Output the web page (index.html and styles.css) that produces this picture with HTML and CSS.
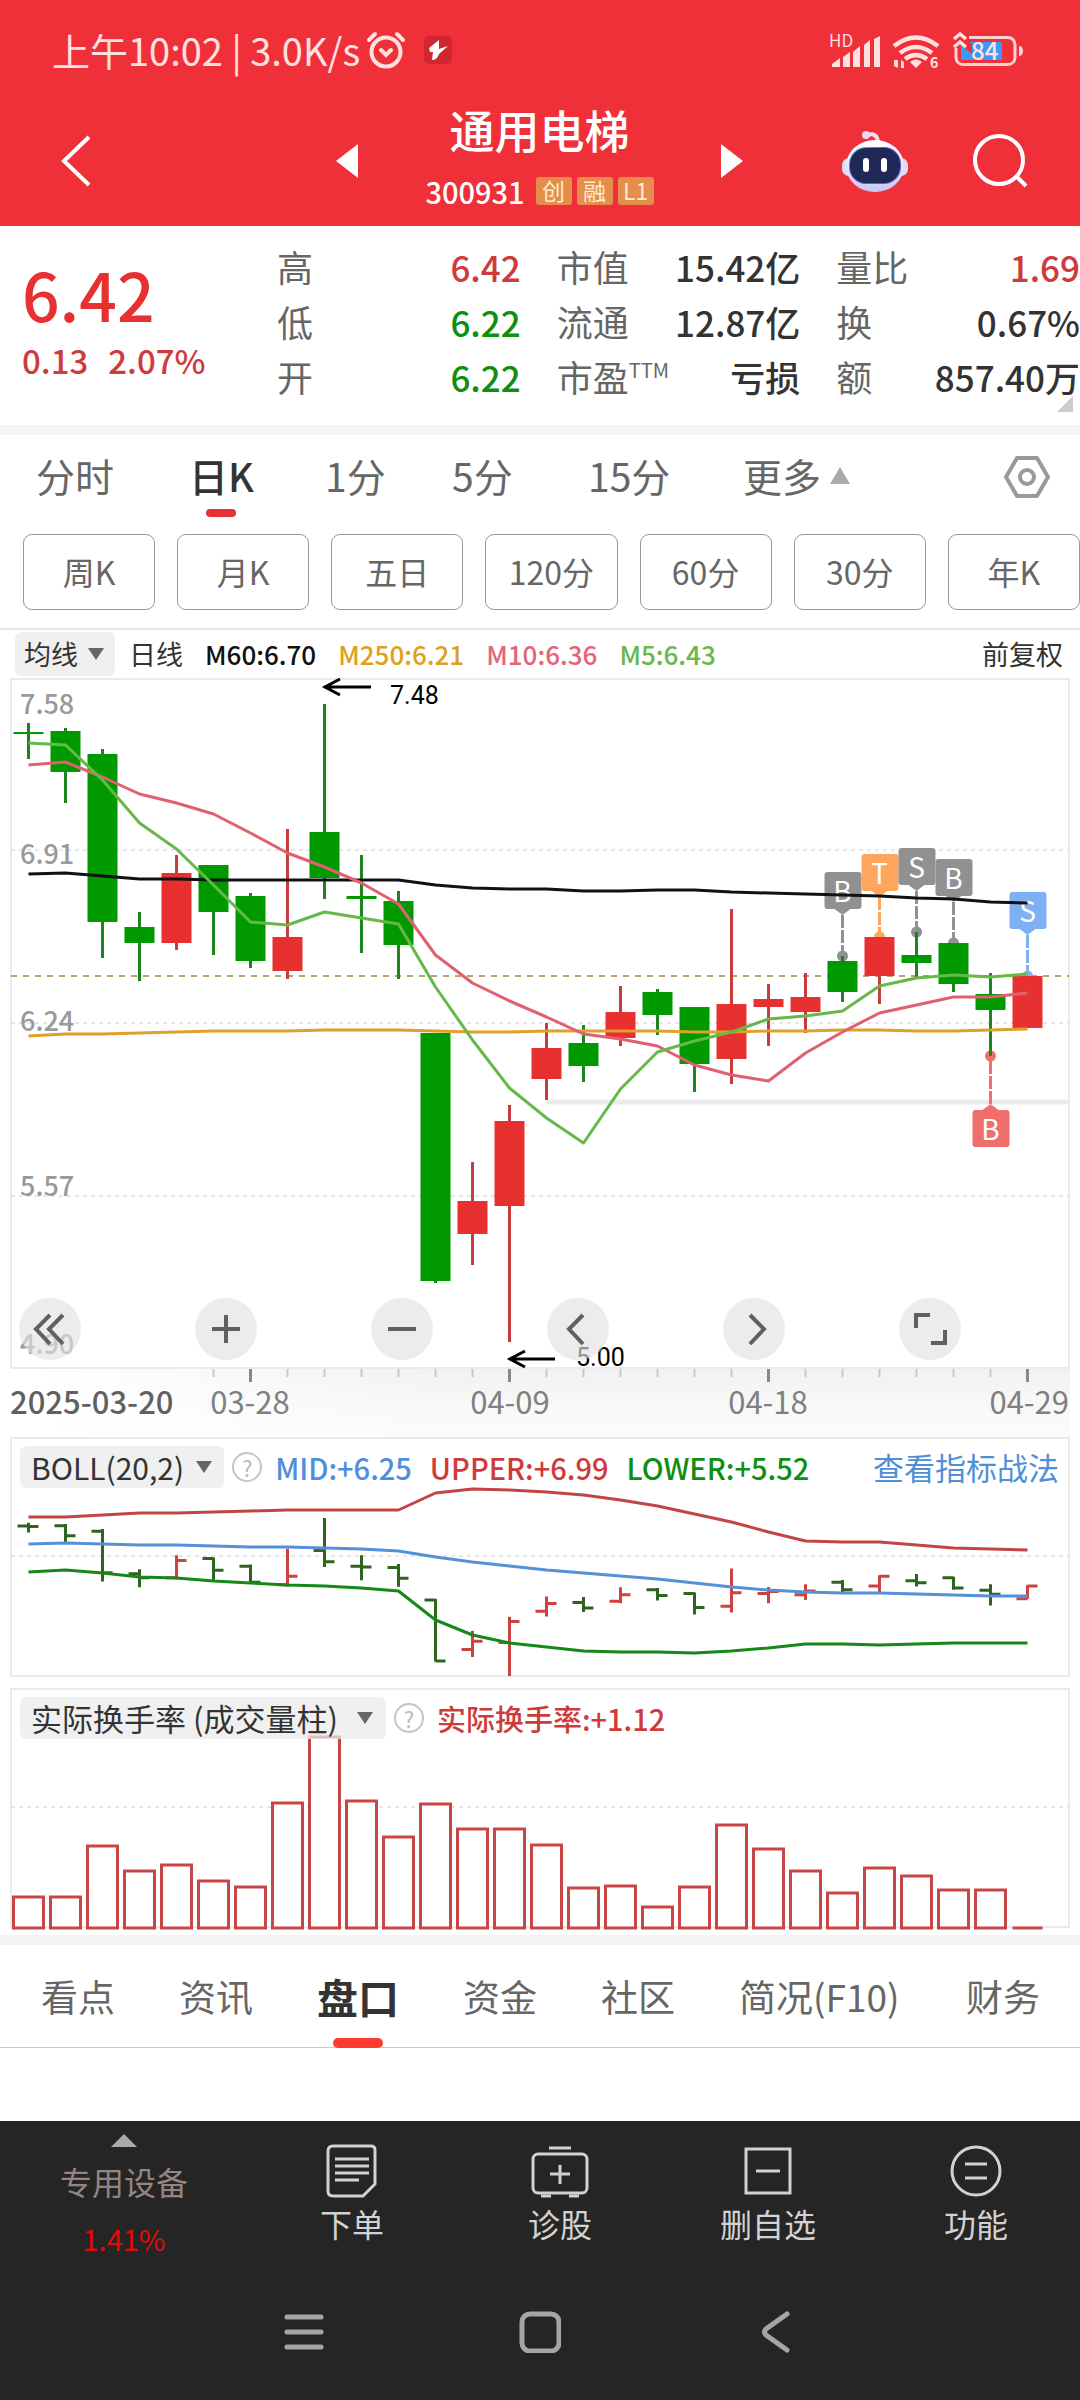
FILE: index.html
```html
<!DOCTYPE html>
<html lang="zh-CN">
<head>
<meta charset="utf-8">
<meta name="viewport" content="width=device-width, initial-scale=1">
<title>通用电梯 300931</title>
<link rel="stylesheet" href="styles.css">
</head>
<body>
<div class="app">
  <header class="header">
    <div class="status">
      <span class="status-text">上午10:02 | 3.0K/s</span>
      <svg class="status-alarm" width="40" height="38" viewBox="0 0 40 38" fill="none" stroke="#ffe1e1" stroke-width="4" stroke-linecap="round"><circle cx="20" cy="21" r="14.5"/><path d="M3 9 9 3M37 9 31 3M15 19l5 5 5-5"/></svg>
      <svg width="28" height="28" viewBox="0 0 28 28"><rect width="28" height="28" rx="5" fill="#d12530"/><path d="M15 4 5 12l1 4h3l-1 8q5 0 7-6l9-8-9 3z" fill="#fff"/></svg>
      <svg class="status-right" width="206" height="38" viewBox="828 31 206 38">
        <text x="829" y="47" class="hd">HD</text>
        <g fill="#ffe1e1"><path d="M832 67v-3l8-6v9zM843 67v-10l7-5v15zM853 67V52l7-6v21zM864 67V45l6-5v27zM874 67V39l6-3v31z"/>
        <path d="M916 68l-6-6q6-5 12 0z"/><path d="M894 60v6l4 2V60zM901 60v8h3v-6l3 2z"/></g>
        <g fill="none" stroke="#ffe1e1" stroke-width="4.500"><path d="M894 46q22-17 44 0M900 53q16-12 32 0M905 59q11-8 22 0"/></g>
        <text x="930" y="68" class="wifi-num">6</text>
        <rect x="956" y="37.500" width="59" height="27" rx="7" fill="none" stroke="#ffd3d3" stroke-width="3"/>
        <path d="M952 32h17v16h-17z" fill="#f03038"/>
        <path d="M961 42h41v18h-41z" fill="#3f97f7"/>
        <path d="M960 44l6-4 6 4v10z" fill="#f03038"/>
        <path d="M954 39l6-5 6 5M954 47l6-5 6 5" fill="none" stroke="#ffe1e1" stroke-width="3.500"/>
        <path d="M1019 46q4 0 4 5t-4 5z" fill="#ffd3d3"/>
        <text x="971" y="60" class="battery">84</text>
      </svg>
    </div>
    <div class="titlebar">
      <button class="icon-btn back" aria-label="返回"><svg width="32" height="54" viewBox="0 0 32 54"><path d="M29 3 4 27l25 24" fill="none" stroke="#fff" stroke-width="4"/></svg></button>
      <button class="icon-btn" aria-label="上一只"><svg width="22" height="34" viewBox="0 0 22 34"><path d="M22 0v34L0 17z" fill="#fff"/></svg></button>
      <div class="title">
        <h1>通用电梯</h1>
        <div class="code"><span>300931</span><i>创</i><i>融</i><i>L1</i></div>
      </div>
      <button class="icon-btn" aria-label="下一只"><svg width="22" height="34" viewBox="0 0 22 34"><path d="M0 0v34l22-17z" fill="#fff"/></svg></button>
      <button class="icon-btn robot" aria-label="智能助手"><svg width="68" height="64" viewBox="0 0 68 64">
        <defs><linearGradient id="shell" x1="0" y1="0" x2="0" y2="1"><stop offset="0" stop-color="#fff"/><stop offset=".6" stop-color="#dfe0fb"/><stop offset="1" stop-color="#c7c8f2"/></linearGradient>
        <linearGradient id="visor" x1="0" y1="0" x2="1" y2="1"><stop offset="0" stop-color="#76d5ec"/><stop offset=".4" stop-color="#6a44c8"/><stop offset="1" stop-color="#7a5be0"/></linearGradient></defs>
        <path d="M26 6q10-3 11 7" fill="none" stroke="#f3dff0" stroke-width="4"/><circle cx="25" cy="6" r="4" fill="#ecd9f2"/>
        <rect x="1" y="29" width="66" height="18" rx="7" fill="#dcdcf8"/>
        <ellipse cx="34" cy="37" rx="29" ry="26" fill="url(#shell)"/>
        <rect x="8" y="18" width="52" height="37" rx="17" fill="url(#visor)"/><rect x="9" y="19" width="50" height="35" rx="16" fill="#1f2955"/>
        <rect x="22" y="29" width="6" height="14" rx="3" fill="#fff"/><rect x="40" y="29" width="6" height="14" rx="3" fill="#fff"/></svg></button>
      <button class="icon-btn" aria-label="搜索"><svg width="58" height="58" viewBox="0 0 58 58" fill="none" stroke="#fff" stroke-width="4"><circle cx="28" cy="28" r="24"/><path d="M45 44l10 10"/></svg></button>
    </div>
  </header>

  <main>
    <section class="quote">
      <div class="price"><strong>6.42</strong><div><span>0.13</span><span>2.07%</span></div></div>
      <dl>
        <div><dt>高</dt><dd class="up">6.42</dd></div><div><dt>市值</dt><dd>15.42亿</dd></div><div><dt>量比</dt><dd class="up">1.69</dd></div>
        <div><dt>低</dt><dd class="down">6.22</dd></div><div><dt>流通</dt><dd>12.87亿</dd></div><div><dt>换</dt><dd>0.67%</dd></div>
        <div><dt>开</dt><dd class="down">6.22</dd></div><div><dt>市盈<sup>TTM</sup></dt><dd>亏损</dd></div><div><dt>额</dt><dd>857.40万</dd></div>
      </dl>
      <span class="corner"></span>
    </section>

    <nav class="periods">
      <button>分时</button><button class="active">日K</button><button>1分</button><button>5分</button><button>15分</button>
      <button class="more">更多<svg width="20" height="17" viewBox="0 0 20 17"><path d="M10 0 20 17H0z" fill="#aaa"/></svg></button>
      <button class="icon-btn" aria-label="设置"><svg width="46" height="42" viewBox="0 0 46 42" fill="none" stroke="#999" stroke-width="4" stroke-linejoin="round"><path d="M13 2h20l11 19-11 19H13L2 21z"/><circle cx="23" cy="21" r="7"/></svg></button>
    </nav>
    <div class="chips"><button>周K</button><button>月K</button><button>五日</button><button>120分</button><button>60分</button><button>30分</button><button>年K</button></div>

    <div class="ma">
      <button class="picker">均线<svg width="16" height="12" viewBox="0 0 16 12"><path d="M0 0h16L8 12z" fill="#666"/></svg></button>
      <span>日线</span><b class="m60">M60:6.70</b><b class="m250">M250:6.21</b><b class="m10">M10:6.36</b><b class="m5">M5:6.43</b>
      <span class="adjust">前复权</span>
    </div>

    <section class="kline">
      <svg class="plot" viewBox="0 678 1080 759">
        <defs><linearGradient id="shade" x1="0" y1="0" x2="0" y2="1"><stop offset="0" stop-color="#f1f1f1"/><stop offset=".5" stop-color="#f8f8f8"/><stop offset="1" stop-color="#fbfbfb"/></linearGradient>
        <linearGradient id="fade"><stop offset="0" stop-color="#fff"/><stop offset="1" stop-color="#fff" stop-opacity="0"/></linearGradient></defs>
        <rect x="40" y="1369" width="1030" height="68" fill="url(#shade)"/><rect x="39" y="1369" width="400" height="68" fill="url(#fade)"/>
        <rect x="11" y="679" width="1058" height="689" class="frame"/>
        <path d="M11 850H1069M11 1023H1069M11 1196H1069" class="grid"/>
        <path d="M547 1102H1069" stroke="#ebebeb" stroke-width="5"/>
        <path d="M11 976H1069" class="last"/>
        <g class="scale"><text x="20" y="714">7.58</text><text x="20" y="864">6.91</text><text x="20" y="1031">6.24</text><text x="20" y="1196">5.57</text><text x="20" y="1354">4.90</text></g>
        <g id="markers"></g><g id="candles"></g><g id="averages" class="curve"></g>
        <g class="callout"><path d="M371 687H326M340 679l-15 8 15 8"/><text x="390" y="704">7.48</text><path d="M555 1359H511M525 1351l-15 8 15 8"/><text x="576" y="1366">5.00</text></g>
        <g id="ticks"></g>
        <g class="dates"><text x="10" y="1414" class="first">2025-03-20</text><text x="250" y="1414" text-anchor="middle">03-28</text><text x="510" y="1414" text-anchor="middle">04-09</text><text x="768" y="1414" text-anchor="middle">04-18</text><text x="1069" y="1414" text-anchor="end">04-29</text></g>
      </svg>
      <div class="controls">
        <button aria-label="收起"><svg viewBox="0 0 62 62"><path d="M31 17 17 31l14 15M44 17 30 31l14 15"/></svg></button>
        <button aria-label="放大"><svg viewBox="0 0 62 62"><path d="M17 31h28M31 17v28"/></svg></button>
        <button aria-label="缩小"><svg viewBox="0 0 62 62"><path d="M17 31h28"/></svg></button>
        <button aria-label="左移"><svg viewBox="0 0 62 62"><path d="M36 17 22 31l14 15"/></svg></button>
        <button aria-label="右移"><svg viewBox="0 0 62 62"><path d="M27 17 41 31 27 46"/></svg></button>
        <button aria-label="全屏"><svg viewBox="0 0 62 62"><path d="M17 30V17h14M46 32v13H32"/></svg></button>
      </div>
    </section>

    <section class="indicator">
      <svg class="plot" viewBox="0 1437 1080 240"><rect x="11" y="1438" width="1058" height="238" class="frame"/><path d="M11 1556H1069" class="grid"/><g id="bars"></g><g id="boll" class="curve"></g></svg>
      <div class="legend"><button class="picker">BOLL(20,2)<svg width="16" height="12" viewBox="0 0 16 12"><path d="M0 0h16L8 12z" fill="#666"/></svg></button><button class="help" aria-label="说明">?</button><b class="mid">MID:+6.25</b><b class="up">UPPER:+6.99</b><b class="down">LOWER:+5.52</b><a href="#">查看指标战法</a></div>
    </section>
    <section class="indicator">
      <svg class="plot" viewBox="0 1688 1080 242"><rect x="11" y="1689" width="1058" height="238" class="frame"/><path d="M11 1807H1069" class="grid"/><g id="turnover" fill="#fff" stroke="#c94646" stroke-width="3"></g></svg>
      <div class="legend"><button class="picker wide">实际换手率 (成交量柱)<svg width="16" height="12" viewBox="0 0 16 12"><path d="M0 0h16L8 12z" fill="#666"/></svg></button><button class="help" aria-label="说明">?</button><b class="up">实际换手率:+1.12</b></div>
    </section>

    <nav class="sections"><a href="#">看点</a><a href="#">资讯</a><a href="#" class="active">盘口</a><a href="#">资金</a><a href="#">社区</a><a href="#">简况(F10)</a><a href="#">财务</a></nav>
  </main>

  <footer>
    <div class="actions">
      <button class="sector"><svg width="26" height="13" viewBox="0 0 26 13"><path d="M13 0 26 13H0z" fill="#aaa"/></svg><span>专用设备</span><em>1.41%</em></button>
      <button><svg width="58" height="54" viewBox="0 0 58 54"><path d="M10 2h38q4 0 4 4v34L40 52H10q-5 0-5-5V7q0-5 5-5zM12 15h34M12 22h34M12 29h34M12 36h24"/></svg>下单</button>
      <button><svg width="58" height="54" viewBox="0 0 58 54"><rect x="2" y="10" width="54" height="39" rx="5"/><path d="M18 4h22M10 52h10M38 52h10M29 21v19M19 30h20"/></svg>诊股</button>
      <button><svg width="58" height="54" viewBox="0 0 58 54"><path d="M7 5h44v44H7zM17 27h24"/></svg>删自选</button>
      <button><svg width="58" height="54" viewBox="0 0 58 54"><circle cx="29" cy="27" r="24"/><path d="M18 20h22M18 34h22"/></svg>功能</button>
    </div>
    <div class="system">
      <button aria-label="最近任务"><svg width="42" height="42" viewBox="0 0 42 42"><path d="M4 6h34M4 21h34M4 36h34"/></svg></button>
      <button aria-label="主屏幕"><svg width="42" height="42" viewBox="0 0 42 42"><rect x="3" y="3" width="37" height="37" rx="8"/></svg></button>
      <button aria-label="返回"><svg width="42" height="42" viewBox="0 0 42 42"><path d="M32 3 11 18q-3 3 0 6l21 15"/></svg></button>
    </div>
  </footer>
</div>
<script src="chart.js"></script>
</body>
</html>
```
FILE: chart.js
```js
// Each candle: direction, then y of high, body top, body bottom, low.
const candles = [
  ['g',723,732,734,759],['g',728,731,772,803],['g',749,754,922,958],['g',912,927,943,981],
  ['r',855,873,943,950],['g',865,865,912,955],['g',893,896,961,968],['r',829,937,971,979],
  ['g',704,832,878,899],['g',855,896,899,953],['g',891,901,945,979],['g',1033,1033,1281,1283],
  ['r',1162,1201,1234,1265],['r',1105,1121,1206,1342],['r',1023,1048,1079,1100],['g',1025,1043,1066,1082],
  ['r',986,1012,1038,1046],['g',989,992,1015,1035],['g',1007,1007,1064,1092],['r',909,1004,1059,1084],
  ['r',984,999,1007,1046],['r',973,997,1012,1033],['g',956,961,992,1002],['r',937,937,976,1004],
  ['g',932,955,963,978],['g',943,943,984,992],['g',973,994,1010,1056],['r',976,976,1028,1028]
];
const averages = [
  ['#111111', [874,873,876,879,879,880,880,880,880,880,880,885,888,889,889,891,891,890,890,892,893,894,895,896,898,899,902,903]],
  ['#e0a02a', [1036,1034,1034,1033,1032,1031,1031,1031,1030,1030,1030,1031,1032,1032,1031,1031,1031,1031,1032,1032,1031,1031,1030,1030,1031,1031,1030,1029]],
  ['#e06070', [765,762,777,794,803,814,833,853,867,883,904,955,983,1001,1017,1034,1039,1046,1065,1075,1081,1053,1032,1013,1005,997,997,993]],
  ['#67b84a', [743,745,780,823,849,885,922,925,912,918,924,987,1040,1088,1118,1143,1089,1052,1041,1032,1019,1016,1011,986,978,975,977,974]]
];
const boll = [
  ['#c24444', [1517,1517,1515,1513,1513,1512,1511,1510,1510,1510,1510,1493,1489,1490,1492,1495,1500,1506,1514,1522,1532,1541,1542,1542,1545,1548,1549,1550]],
  ['#5590d8', [1544,1543,1544,1545,1545,1546,1547,1547,1548,1549,1551,1557,1562,1566,1570,1573,1576,1579,1583,1587,1590,1592,1593,1593,1594,1595,1596,1596]],
  ['#16881a', [1572,1570,1573,1577,1578,1581,1583,1585,1586,1588,1591,1620,1635,1643,1647,1651,1652,1652,1653,1651,1648,1644,1644,1645,1644,1643,1643,1643]]
];
const turnover = [1897,1897,1846,1871,1865,1881,1887,1803,1737,1801,1837,1804,1829,1829,1845,1888,1886,1907,1887,1825,1849,1871,1893,1868,1876,1890,1890,1928];
// Trade markers: index, letter, colour, badge top, dot y.
const markers = [
  [22,'B','#919191',872,956],[23,'T','#ffa65c',854,937],[24,'S','#919191',848,932],
  [25,'B','#919191',859,943],[27,'S','#7db1f3',892,976],[26,'B','#ef6e6e',1110,1056]
];
const x = i => 28.5 + 37 * i;
const fill = (id, html) => { document.getElementById(id).innerHTML = html; };
const lines = list => list.map(([c, ys]) =>
  `<polyline stroke="${c}" points="${ys.map((y, i) => x(i) + ',' + y).join(' ')}"/>`).join('');

fill('candles', candles.map(([d, h, t, b, l], i) =>
  `<path d="M${x(i)} ${h}V${l}" stroke="${d === 'r' ? '#c83c3c' : '#1c861c'}" stroke-width="3"/>` +
  `<rect x="${x(i) - 15}" y="${t}" width="30" height="${b - t}" fill="${d === 'r' ? '#e83030' : '#009900'}"/>`).join(''));
fill('averages', lines(averages));
fill('boll', lines(boll));

const small = y => 1519 + (y - 704) * 0.246;
fill('bars', candles.map(([d, h, t, b, l], i) => {
  const [open, close] = d === 'r' ? [b, t] : [t, b];
  return `<path fill="none" stroke-width="3" stroke="${d === 'r' ? '#cf4040' : '#2f641c'}" d="M${x(i)} ${small(h) - 1}V${small(l)}M${x(i) - 11} ${small(open)}H${x(i)}M${x(i)} ${small(close)}H${x(i) + 10}"/>`;
}).join(''));
fill('turnover', turnover.map((y, i) =>
  `<path d="M${x(i) - 15} 1928V${y}h30V1928z"/>`).join(''));

let ticks = '';
for (let i = 5; i < 28; i++) {
  const major = i % 7 === 6;
  ticks += `<path d="M${x(i)} 1369v${major ? 13 : 8}" stroke="${major ? '#888' : '#c8c8c8'}" stroke-width="${major ? 3 : 2}"/>`;
}
fill('ticks', ticks);

fill('markers', markers.map(([i, letter, c, top, dot]) => {
  const below = top > dot, cx = x(i), edge = below ? top : top + 37, tip = below ? top - 6 : top + 43;
  return `<path d="M${cx} ${tip}V${dot}" stroke="${c}" stroke-width="3" stroke-dasharray="13 2"/>` +
    `<circle cx="${cx}" cy="${dot}" r="5.500" fill="${c}"/>` +
    `<rect x="${cx - 18}" y="${top}" width="37" height="37" rx="3" fill="${c}"/>` +
    `<path d="M${cx - 8} ${edge}L${cx} ${tip}L${cx + 8} ${edge}z" fill="${c}"/>` +
    `<text x="${cx}" y="${top + 30}" class="mark">${letter}</text>`;
}).join(''));
```
FILE: styles.css
```css
* { box-sizing: border-box; }
body { margin: 0; background: #fff; color: #333; font-family: "Noto Sans CJK SC", "Noto Sans", sans-serif; }
button { margin: 0; padding: 0; border: 0; background: none; color: inherit; font: inherit; cursor: pointer; }
a { color: inherit; text-decoration: none; }
svg { display: block; flex: none; }
.app { display: flex; flex-direction: column; min-height: 100vh; overflow: hidden; }
main { flex: 1; }
.icon-btn { display: flex; align-items: center; justify-content: center; }
.up { color: #cf3a3a; }
.down { color: #0f8f0f; }

/* header */
.header { height: 226px; background: #f03038; color: #fff; }
.status { display: flex; align-items: center; height: 100px; padding: 0 46px 0 52px; color: #ffe1e1; font-size: 38px; line-height: 56px; }
.status-text { white-space: pre; font-weight: 400; }
.status-alarm { margin: 0 18px 0 6px; }
.status-right { margin-left: auto; overflow: visible; }
.status text { fill: #ffe1e1; }
.hd { font-size: 17px; }
.wifi-num { font-size: 14px; font-weight: 700; }
.battery { font-size: 24px; font-weight: 500; }
.titlebar { display: grid; grid-template-columns: 313fr 68fr 317fr 68fr 163fr 151fr; align-items: center; height: 118px; }
.titlebar .back { justify-content: flex-start; padding-left: 60px; }
.title { display: flex; flex-direction: column; align-items: center; }
.title h1 { margin: 0; font-size: 45px; font-weight: 500; line-height: 60px; }
.code { display: flex; align-items: center; gap: 5px; font-size: 29px; font-weight: 500; line-height: 62px; }
.code span { margin-right: 6px; }
.code i { width: 36px; height: 28px; border-radius: 3px; background: #e58d4a; color: #ffeccf; font-size: 23px; font-style: normal; font-weight: 400; line-height: 27px; text-align: center; }
.robot { padding-left: 55px; }
.robot + .icon-btn { padding-right: 9px; }

/* quote */
.quote { position: relative; display: flex; height: 209px; border-bottom: 10px solid #f4f4f4; }
.price { width: 277px; padding: 24px 0 0 22px; color: #cf3a3a; }
.price strong { display: block; color: #e83030; font-size: 66px; font-weight: 500; line-height: 86px; }
.price div { display: flex; gap: 20px; font-size: 33px; font-weight: 500; line-height: 48px; }
.quote dl { flex: 1; display: grid; grid-template-columns: repeat(3, 1fr); grid-auto-rows: 55px; column-gap: 36px; margin: 0; padding: 13px 0; }
.quote dl div { display: flex; justify-content: space-between; line-height: 55px; white-space: nowrap; }
.quote dt { color: #666; font-size: 36px; }
.quote dd { margin: 0; font-size: 35px; font-weight: 500; }
.quote sup { font-size: 20px; line-height: 20px; vertical-align: 14px; }
.corner { position: absolute; right: 7px; bottom: 13px; border-left: 16px solid transparent; border-bottom: 16px solid #ccc; }

/* periods */
.periods { display: grid; grid-template-columns: 153fr 136fr 127fr 136fr 155fr 230fr 107fr; height: 99px; padding-left: 36px; color: #666; font-size: 39px; line-height: 80px; }
.periods button { justify-self: start; height: 83px; padding-bottom: 3px; }
.periods .icon-btn { justify-self: center; padding-bottom: 0; }
.periods .active { position: relative; color: #333; font-weight: 500; }
.periods .active::after { content: ""; position: absolute; left: 50%; bottom: 1px; width: 30px; height: 8px; margin-left: -15px; border-radius: 4px; background: #e83030; }
.more { display: flex; align-items: center; gap: 9px; }
.chips { display: grid; grid-template-columns: repeat(7, 1fr); gap: 22px; padding: 0 0 18px 23px; }
.chips button { height: 76px; padding-bottom: 3px; border: 1px solid #999; border-radius: 9px; color: #666; font-size: 32px; line-height: 70px; white-space: nowrap; }

/* moving averages */
.ma { display: flex; align-items: center; gap: 22px; height: 50px; padding: 0 17px 0 15px; border-top: 2px solid #e8e8e8; font-size: 27px; line-height: 44px; }
.ma b { font-size: 26px; font-weight: 500; }
.ma .picker { height: 44px; padding: 0 11px 0 9px; margin-right: -8px; }
.adjust { margin-left: auto; }
.picker { display: flex; align-items: center; gap: 10px; border-radius: 6px; background: rgba(235, 235, 235, .75); }
.m60 { color: #111; }
.m250 { color: #dfa020; }
.m10 { color: #e3657a; }
.m5 { color: #68b84a; }

/* charts */
.kline, .indicator { position: relative; }
.plot { width: 100%; }
.plot text { font-size: 27px; }
.frame { fill: none; stroke: #ebebeb; stroke-width: 2; }
.grid { fill: none; stroke: #e6e6e6; stroke-width: 2; stroke-dasharray: 4 4; }
.last { stroke: #b8a270; stroke-width: 2; stroke-dasharray: 6 6; }
.scale { fill: #999; font-weight: 500; }
.curve { fill: none; stroke-width: 3; stroke-linejoin: round; }
.callout { fill: #000; font-family: Roboto, sans-serif; }
.callout path { fill: none; stroke: #000; stroke-width: 3; }
.plot .callout text { font-size: 25px; }
.plot .dates text { font-size: 31px; }
.dates { fill: #808080; }
.plot .dates .first { fill: #606060; font-weight: 500; }
.plot .mark { fill: #fff; font-size: 28px; text-anchor: middle; }
.controls { position: absolute; left: 19px; bottom: 77px; display: flex; gap: 114px; }
.controls button { width: 62px; height: 62px; border-radius: 50%; background: rgba(226, 226, 226, .65); }
.controls svg { width: 62px; height: 62px; fill: none; stroke: #606060; stroke-width: 4; }
.indicator + .indicator { margin-top: 11px; }
.legend { position: absolute; top: 9px; left: 20px; right: 21px; display: flex; align-items: center; font-size: 29px; line-height: 40px; white-space: nowrap; }
.legend b { margin-right: 18px; font-weight: 500; }
.legend .picker { height: 42px; gap: 12px; padding: 0 12px 0 11px; font-size: 30px; }
.legend .wide { gap: 19px; padding-right: 13px; font-size: 31px; }
.legend a { margin-left: auto; color: #4f8fd8; font-size: 31px; }
.mid { color: #4f8fd8; }
.help { width: 30px; height: 30px; margin: 0 13px 0 8px; border: 2px solid #c4c4c4; border-radius: 50%; color: #bbb; font-size: 22px; line-height: 26px; }

/* section tabs */
.sections { display: flex; gap: 64px; margin-top: 5px; padding: 0 40px 0 41px; border-top: 10px solid #f4f4f4; color: #666; font-size: 37px; line-height: 103px; box-shadow: inset 0 -1px #c8c8c8; }
.sections a { white-space: nowrap; }
.sections a:last-child { margin-left: auto; }
.sections .active { position: relative; color: #333; font-size: 41px; font-weight: 700; }
.sections .active::after { content: ""; position: absolute; left: 50%; bottom: 0; width: 50px; height: 10px; margin-left: -25px; border-radius: 5px; background: #ff3b30; }

/* footer */
footer { background: #252525; color: #d2d2d2; }
footer svg { fill: none; stroke: #d2d2d2; stroke-width: 3; }
.actions { display: grid; grid-template-columns: 248fr repeat(4, 208fr); height: 155px; }
.actions button { display: flex; flex-direction: column; align-items: center; padding-top: 23px; font-size: 32px; line-height: 51px; }
.actions .sector { padding-top: 13px; color: #958580; line-height: 57px; }
.sector svg { margin-bottom: 6px; stroke: none; }
.sector em { color: #e00b0b; font-size: 29px; font-style: normal; }
.system { display: grid; grid-template-columns: repeat(3, 236px); justify-content: center; height: 124px; align-items: start; padding-top: 35px; }
.system button { justify-self: center; }
.system svg { stroke: #a5a5a5; stroke-width: 5; stroke-linecap: round; }
```
